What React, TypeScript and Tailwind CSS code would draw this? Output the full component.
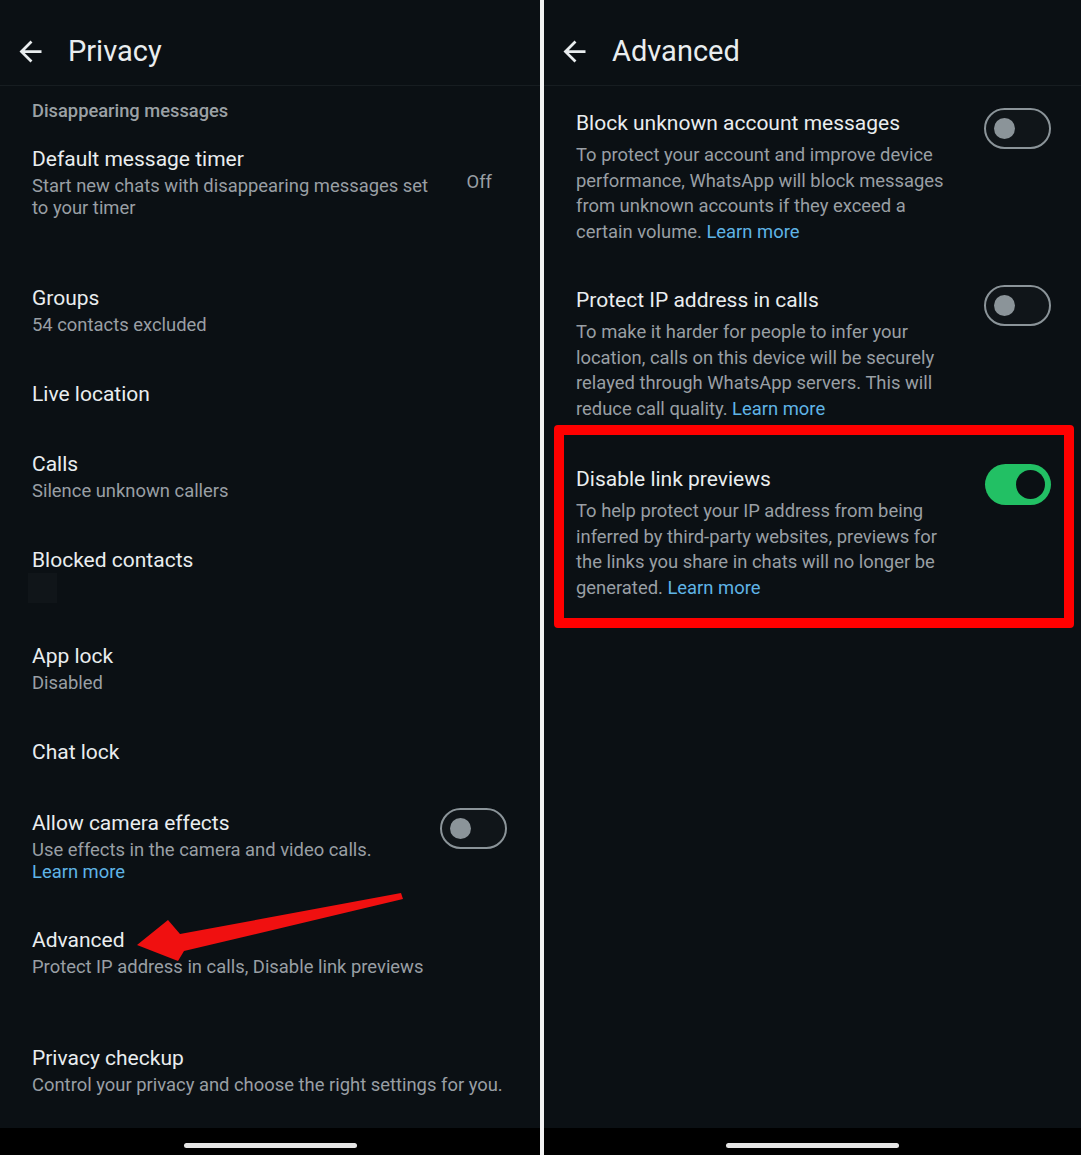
import React from "react";

const FONT = { fontFamily: "Roboto, 'Noto Sans', 'Liberation Sans', sans-serif" };

function BackArrow() {
  return (
    <svg width="33" height="33" viewBox="0 0 24 24" className="shrink-0">
      <path
        d="M20 11H7.83l5.59-5.59L12 4l-8 8 8 8 1.41-1.41L7.83 13H20v-2z"
        fill="#e9edef"
      />
    </svg>
  );
}

function Toggle({ on }: { on?: boolean }) {
  if (on) {
    return (
      <div className="relative w-[66px] h-[41px] rounded-full bg-[#22c064] shrink-0">
        <div className="absolute right-[6px] top-[6px] w-[29px] h-[29px] rounded-full bg-[#0b1014]" />
      </div>
    );
  }
  return (
    <div className="relative w-[67px] h-[41px] rounded-full border-2 border-[#8b9499] bg-[#101519] shrink-0">
      <div className="absolute left-[8px] top-[8px] w-[21px] h-[21px] rounded-full bg-[#8b9499]" />
    </div>
  );
}

function Header({ title }: { title: string }) {
  return (
    <div className="h-[86px] border-b border-[#171d21] shrink-0">
      <div className="flex items-center pt-[34px] h-[68px]">
        <div className="ml-[14px] flex items-center">
          <BackArrow />
        </div>
        <div className="ml-[21px] text-[29px] leading-[34px] text-[#e9edef]">{title}</div>
      </div>
    </div>
  );
}

function NavBar() {
  return (
    <div className="h-[27px] bg-black flex justify-center shrink-0">
      <div className="mt-[15px] w-[173px] h-[5px] rounded-full bg-[#e6e6e6]" />
    </div>
  );
}

const T = "text-[21px] leading-[26px] text-[#e9edef]";
const S = "text-[18.4px] leading-[22px] text-[#999fa4]";
const L = "text-[#5fb4e6]";

function Row({
  mt,
  title,
  sub,
  children,
}: {
  mt: number;
  title: string;
  sub?: React.ReactNode;
  children?: React.ReactNode;
}) {
  return (
    <div className="px-[32px]" style={{ marginTop: mt }}>
      <div className={T}>{title}</div>
      {sub && <div className={`${S} mt-[3px]`}>{sub}</div>}
      {children}
    </div>
  );
}

function LeftPanel() {
  return (
    <div className="relative w-[540px] h-full flex flex-col bg-[#0b1014]">
      <Header title="Privacy" />
      <div className="flex-1">
        <div className="px-[32px] pt-[14px] text-[18.3px] leading-[22px] font-medium text-[#9ba1a5]">
          Disappearing messages
        </div>
        <div className="flex items-center pl-[32px] pr-[48px] mt-[24px]">
          <div className="flex-1">
            <div className={T}>Default message timer</div>
            <div className={`${S} mt-[3px]`}>
              Start new chats with disappearing messages set
              <br />
              to your timer
            </div>
          </div>
          <div className={`${S} -mt-[2px]`}>Off</div>
        </div>
        <Row mt={66} title="Groups" sub="54 contacts excluded" />
        <Row mt={45} title="Live location" />
        <Row mt={44} title="Calls" sub="Silence unknown callers" />
        <div className="pl-[28px]" style={{ marginTop: 45 }}>
          <div className={`${T} pl-[4px]`}>Blocked contacts</div>
          <div className="w-[29px] h-[30px] bg-[#101519]" />
        </div>
        <Row mt={40} title="App lock" sub="Disabled" />
        <Row mt={45} title="Chat lock" />
        <div className="flex items-start pl-[32px] pr-[33px] mt-[45px]">
          <div className="flex-1">
            <div className={T}>Allow camera effects</div>
            <div className={`${S} mt-[3px]`}>
              Use effects in the camera and video calls.
              <br />
              <span className={L}>Learn more</span>
            </div>
          </div>
          <div className="-mt-[2px]">
            <Toggle />
          </div>
        </div>
        <Row mt={44} title="Advanced" sub="Protect IP address in calls, Disable link previews" />
        <Row mt={67} title="Privacy checkup" sub="Control your privacy and choose the right settings for you." />
      </div>
      <NavBar />
      <svg
        className="absolute left-0 top-0 pointer-events-none"
        width="540"
        height="1128"
        viewBox="0 0 540 1128"
      >
        <polygon
          points="137,945 168,920 180,934 401,893 403,899 184,951 178,961"
          fill="#f01010"
        />
      </svg>
    </div>
  );
}

const D = "text-[18.4px] leading-[25.5px] text-[#999fa4] mt-[6px]";

function AdvRow({
  mt,
  title,
  on,
  children,
}: {
  mt: number;
  title: string;
  on?: boolean;
  children: React.ReactNode;
}) {
  return (
    <div className="flex items-start pl-[32px] pr-[30px]" style={{ marginTop: mt }}>
      <div className="flex-1">
        <div className={T}>{title}</div>
        <div className={D}>{children}</div>
      </div>
      <div className="-mt-[2px]">
        <Toggle on={on} />
      </div>
    </div>
  );
}

function RightPanel() {
  return (
    <div className="relative flex-1 h-full flex flex-col bg-[#0b1014]">
      <Header title="Advanced" />
      <div className="flex-1 pt-[24px]">
        <AdvRow mt={0} title="Block unknown account messages">
          To protect your account and improve device
          <br />
          performance, WhatsApp will block messages
          <br />
          from unknown accounts if they exceed a
          <br />
          certain volume. <span className={L}>Learn more</span>
        </AdvRow>
        <AdvRow mt={43} title="Protect IP address in calls">
          To make it harder for people to infer your
          <br />
          location, calls on this device will be securely
          <br />
          relayed through WhatsApp servers. This will
          <br />
          reduce call quality. <span className={L}>Learn more</span>
        </AdvRow>
        <AdvRow mt={45} title="Disable link previews" on>
          To help protect your IP address from being
          <br />
          inferred by third-party websites, previews for
          <br />
          the links you share in chats will no longer be
          <br />
          generated. <span className={L}>Learn more</span>
        </AdvRow>
      </div>
      <NavBar />
      <div className="absolute left-[10px] top-[425px] w-[520px] h-[203px] border-[10px] border-[#ff0000] rounded-[4px] pointer-events-none" />
    </div>
  );
}

export default function App() {
  return (
    <div className="w-[1081px] h-[1155px] flex bg-black overflow-hidden" style={FONT}>
      <LeftPanel />
      <div className="w-[4px] h-full bg-[#f2f2f2]" />
      <RightPanel />
    </div>
  );
}
